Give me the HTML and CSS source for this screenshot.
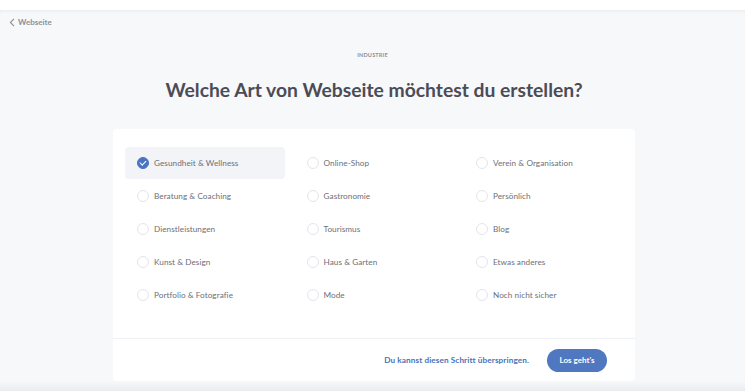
FILE: index.html
```html
<!DOCTYPE html>
<html lang="de">

<head>
    <meta charset="UTF-8">
    <meta name="viewport" content="width=device-width, initial-scale=1.0">
    <title>Webseite erstellen</title>
    <link rel="stylesheet" href="styles.css">
</head>

<body>
    <div class="page">
        <a class="back-link" href="#">
            <svg width="6" height="9" viewBox="0 0 6 9"><path d="M5 0.8 L1.4 4.5 L5 8.2" fill="none" stroke="#8d9099" stroke-width="1.1"/></svg>
            Webseite
        </a>

        <p class="eyebrow">INDUSTRIE</p>
        <h1 class="title">Welche Art von Webseite möchtest du erstellen?</h1>

        <!-- Karte mit den Optionen -->
        <div class="card">
            <div class="options">
                <label class="option selected"><span class="radio"></span>Gesundheit &amp; Wellness</label>
                <label class="option"><span class="radio"></span>Online-Shop</label>
                <label class="option"><span class="radio"></span>Verein &amp; Organisation</label>
                <label class="option"><span class="radio"></span>Beratung &amp; Coaching</label>
                <label class="option"><span class="radio"></span>Gastronomie</label>
                <label class="option"><span class="radio"></span>Persönlich</label>
                <label class="option"><span class="radio"></span>Dienstleistungen</label>
                <label class="option"><span class="radio"></span>Tourismus</label>
                <label class="option"><span class="radio"></span>Blog</label>
                <label class="option"><span class="radio"></span>Kunst &amp; Design</label>
                <label class="option"><span class="radio"></span>Haus &amp; Garten</label>
                <label class="option"><span class="radio"></span>Etwas anderes</label>
                <label class="option"><span class="radio"></span>Portfolio &amp; Fotografie</label>
                <label class="option"><span class="radio"></span>Mode</label>
                <label class="option"><span class="radio"></span>Noch nicht sicher</label>
            </div>

            <div class="card-footer">
                <a class="skip-link" href="#">Du kannst diesen Schritt überspringen.</a>
                <button class="button">Los geht's</button>
            </div>
        </div>
    </div>

    <script>
        // Auswahl der Option umschalten
        document.querySelectorAll('.option').forEach(option => {
            option.addEventListener('click', () => {
                document.querySelectorAll('.option').forEach(o => o.classList.remove('selected'));
                option.classList.add('selected');
            });
        });
    </script>
</body>

</html>
```

FILE: styles.css
```css
/* Estilo global */
body {
    font-family: Lato, "Open Sans", sans-serif;
    background-color: #fff;
    margin: 0;
    padding: 0;
}

/* Seitenbereich */
.page {
    margin-top: 10px;
    margin-right: 5px;
    height: 381px;
    background: linear-gradient(to bottom, #f7f8fa 0, #f7f8fa 371px, #ebecef 381px);
    box-shadow: inset 0 3px 4px -2px rgba(0, 0, 0, 0.06);
    display: flex;
    flex-direction: column;
    align-items: center;
}

/* Zurück-Link */
.back-link {
    align-self: flex-start;
    display: flex;
    align-items: center;
    gap: 3px;
    margin: 7px 0 0 9px;
    font-size: 8px;
    font-weight: 700;
    color: #8d9099;
    text-decoration: none;
    height: 10px;
}

.eyebrow {
    margin: 25px 0 0;
    font-size: 5.5px;
    font-weight: 700;
    letter-spacing: 0.2px;
    color: #8e9098;
}

.title {
    margin: 20px 0 0 3px;
    font-size: 19.3px;
    font-weight: 700;
    color: #4b4c56;
}

/* Karte */
.card {
    margin-top: 28px;
    margin-left: 3px;
    width: 522px;
    height: 252px;
    background-color: #fff;
    border-radius: 4px;
    display: flex;
    flex-direction: column;
}

.options {
    display: grid;
    grid-template-columns: repeat(3, 160px);
    grid-auto-rows: 32px;
    column-gap: 9.5px;
    row-gap: 1px;
    padding: 18px 10px 0 12px;
    flex: 1;
}

.option {
    display: flex;
    align-items: center;
    gap: 5px;
    padding-left: 12px;
    border-radius: 4px;
    font-size: 8.2px;
    letter-spacing: 0.05px;
    color: #6d6f78;
    cursor: pointer;
}

.option.selected {
    background-color: #f3f4f8;
}

.radio {
    width: 10px;
    height: 10px;
    border: 1px solid #e4e5eb;
    border-radius: 50%;
    background-color: #fff;
    box-sizing: content-box;
    position: relative;
}

.option.selected .radio {
    background-color: #4a74c2;
    border-color: #4a74c2;
}

.option.selected .radio::after {
    content: "";
    position: absolute;
    left: 3.3px;
    top: 1.4px;
    width: 2.6px;
    height: 5px;
    border: solid #fff;
    border-width: 0 1.3px 1.3px 0;
    transform: rotate(45deg);
}

/* Fußzeile der Karte */
.card-footer {
    height: 42px;
    border-top: 1px solid #f0f1f4;
    display: flex;
    align-items: center;
    justify-content: flex-end;
    gap: 18px;
    padding-right: 28px;
}

.skip-link {
    font-size: 8.2px;
    font-weight: 700;
    letter-spacing: 0.1px;
    color: #4a72b8;
    text-decoration: none;
}

.button {
    width: 60px;
    height: 23px;
    background-color: #5078c0;
    color: #fff;
    border: none;
    border-radius: 12px;
    font-family: inherit;
    font-size: 8px;
    font-weight: 700;
    cursor: pointer;
}
```
